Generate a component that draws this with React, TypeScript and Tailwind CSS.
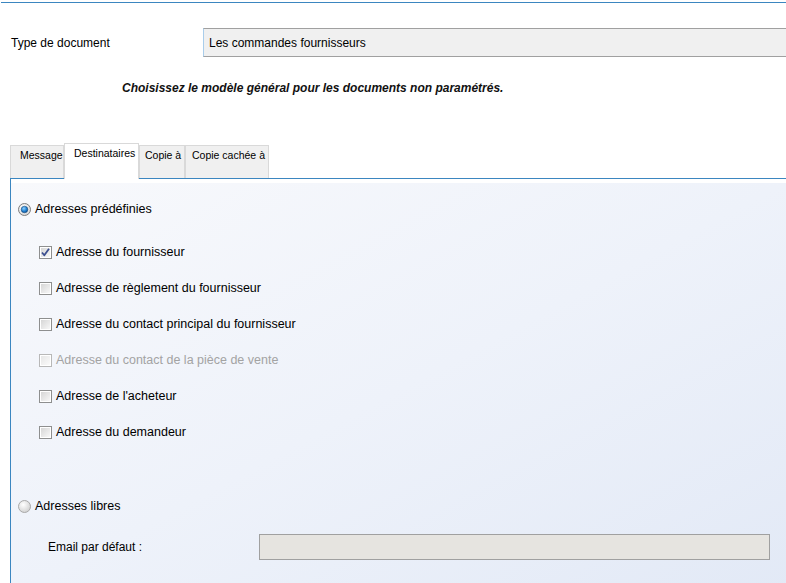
import React from "react";

const font = { fontFamily: '"Liberation Sans", Arial, sans-serif' };

function Radio({ checked }: { checked?: boolean }) {
  return (
    <svg width="13" height="13" viewBox="0 0 13 13" className="shrink-0">
      <defs>
        <radialGradient id={checked ? "rOn" : "rOff"} cx="0.4" cy="0.35" r="0.7">
          <stop offset="0" stopColor="#ffffff" />
          <stop offset="1" stopColor={checked ? "#d4d4d4" : "#cfcfcf"} />
        </radialGradient>
        <radialGradient id="dot" cx="0.4" cy="0.35" r="0.7">
          <stop offset="0" stopColor="#8fd0ff" />
          <stop offset="0.6" stopColor="#1f7fcf" />
          <stop offset="1" stopColor="#0d4f90" />
        </radialGradient>
      </defs>
      <circle cx="6.5" cy="6.5" r="6" fill={`url(#${checked ? "rOn" : "rOff"})`} stroke={checked ? "#7d7d7d" : "#a9a9a9"} strokeWidth="1" />
      {checked && <circle cx="6.5" cy="6.5" r="3.3" fill="url(#dot)" stroke="#0f3f70" strokeWidth="0.5" />}
    </svg>
  );
}

function Checkbox({ checked, disabled }: { checked?: boolean; disabled?: boolean }) {
  return (
    <svg width="13" height="13" viewBox="0 0 13 13" className="shrink-0">
      <defs>
        <linearGradient id="cb" x1="0" y1="0" x2="1" y2="1">
          <stop offset="0" stopColor="#d6d6d6" />
          <stop offset="1" stopColor="#f7f7f7" />
        </linearGradient>
      </defs>
      <rect x="0.5" y="0.5" width="12" height="12" fill="#ffffff" stroke={disabled ? "#b8b8b8" : "#8e8f8f"} />
      <rect x="2" y="2" width="9" height="9" fill="url(#cb)" opacity={disabled ? 0.6 : 1} />
      {checked && (
        <path d="M3 6.5 L5.3 9.3 L10 2.8" fill="none" stroke="#3c4f8f" strokeWidth="1.8" strokeLinejoin="round" />
      )}
    </svg>
  );
}

function Tab({ label, w, pl, active }: { label: string; w: string; pl: string; active?: boolean }) {
  return (
    <div
      className={`${w} ${pl} ${
        active ? "h-[36px] bg-white -mb-[1px] z-10 pt-[2px]" : "h-[33px] bg-[#f0f0f0] pt-[2px]"
      } border border-b-0 border-[#d9d9d9] text-[10.5px] text-black leading-[14px] whitespace-nowrap overflow-hidden`}
    >
      {label}
    </div>
  );
}

const options = [
  { label: "Adresse du fournisseur", checked: true },
  { label: "Adresse de règlement du fournisseur" },
  { label: "Adresse du contact principal du fournisseur" },
  { label: "Adresse du contact de la pièce de vente", disabled: true },
  { label: "Adresse de l'acheteur" },
  { label: "Adresse du demandeur" },
];

export default function App() {
  return (
    <div className="w-[786px] h-[583px] overflow-hidden bg-white text-[12px] text-black" style={font}>
      <div className="mt-[2px] ml-[1px] border-t border-[#3b86c0]" />

      {/* Document type */}
      <div className="flex items-center mt-[25px] h-[29px]">
        <div className="w-[203px] pl-[11px]">Type de document</div>
        <div className="flex-1 h-full flex items-center pl-[5px] bg-[#f0f0f0] border-y border-[#a0a0a0] border-l border-l-[#a9cdeb]">
          Les commandes fournisseurs
        </div>
      </div>

      <div className="mt-[24px] pl-[122px] font-bold italic leading-[14px] text-[#111]">
        Choisissez le modèle général pour les documents non paramétrés.
      </div>

      {/* Tabs */}
      <div className="flex items-end ml-[10px] mt-[48px]">
        <Tab label="Message" w="w-[54px]" pl="pl-[9px]" />
        <Tab label="Destinataires" w="w-[75px]" pl="pl-[9px]" active />
        <Tab label="Copie à" w="w-[46px]" pl="pl-[5px]" />
        <Tab label="Copie cachée à" w="w-[84px]" pl="pl-[6px]" />
      </div>

      {/* Panel */}
      <div className="ml-[10px] border-l border-t border-[#3b86c0] bg-white pt-[4px] h-[420px] relative text-[12.5px]">
        <div className="h-full bg-gradient-to-br from-[#f8f9fc] via-[#eef2fa] to-[#e2e9f6] flex flex-col">
          <div className="flex items-center h-[20px] mt-[16px] ml-[7px] gap-[4px]">
            <Radio checked />
            <span>Adresses prédéfinies</span>
          </div>

          <div className="flex flex-col mt-[15px]">
            {options.map((o) => (
              <div key={o.label} className="flex items-center h-[36px] ml-[28px] gap-[4px]">
                <Checkbox checked={o.checked} disabled={o.disabled} />
                <span className={o.disabled ? "text-[#a3a3a3]" : ""}>{o.label}</span>
              </div>
            ))}
          </div>

          <div className="flex items-center h-[20px] mt-[46px] ml-[7px] gap-[4px]">
            <Radio />
            <span>Adresses libres</span>
          </div>

          <div className="flex items-center h-[26px] mt-[18px] ml-[37px] mr-[16px]">
            <div className="w-[211px] text-[12px]">Email par défaut :</div>
            <div className="flex-1 h-full bg-[#e6e4e0] border border-[#a0a0a0]" />
          </div>
        </div>
      </div>
    </div>
  );
}
